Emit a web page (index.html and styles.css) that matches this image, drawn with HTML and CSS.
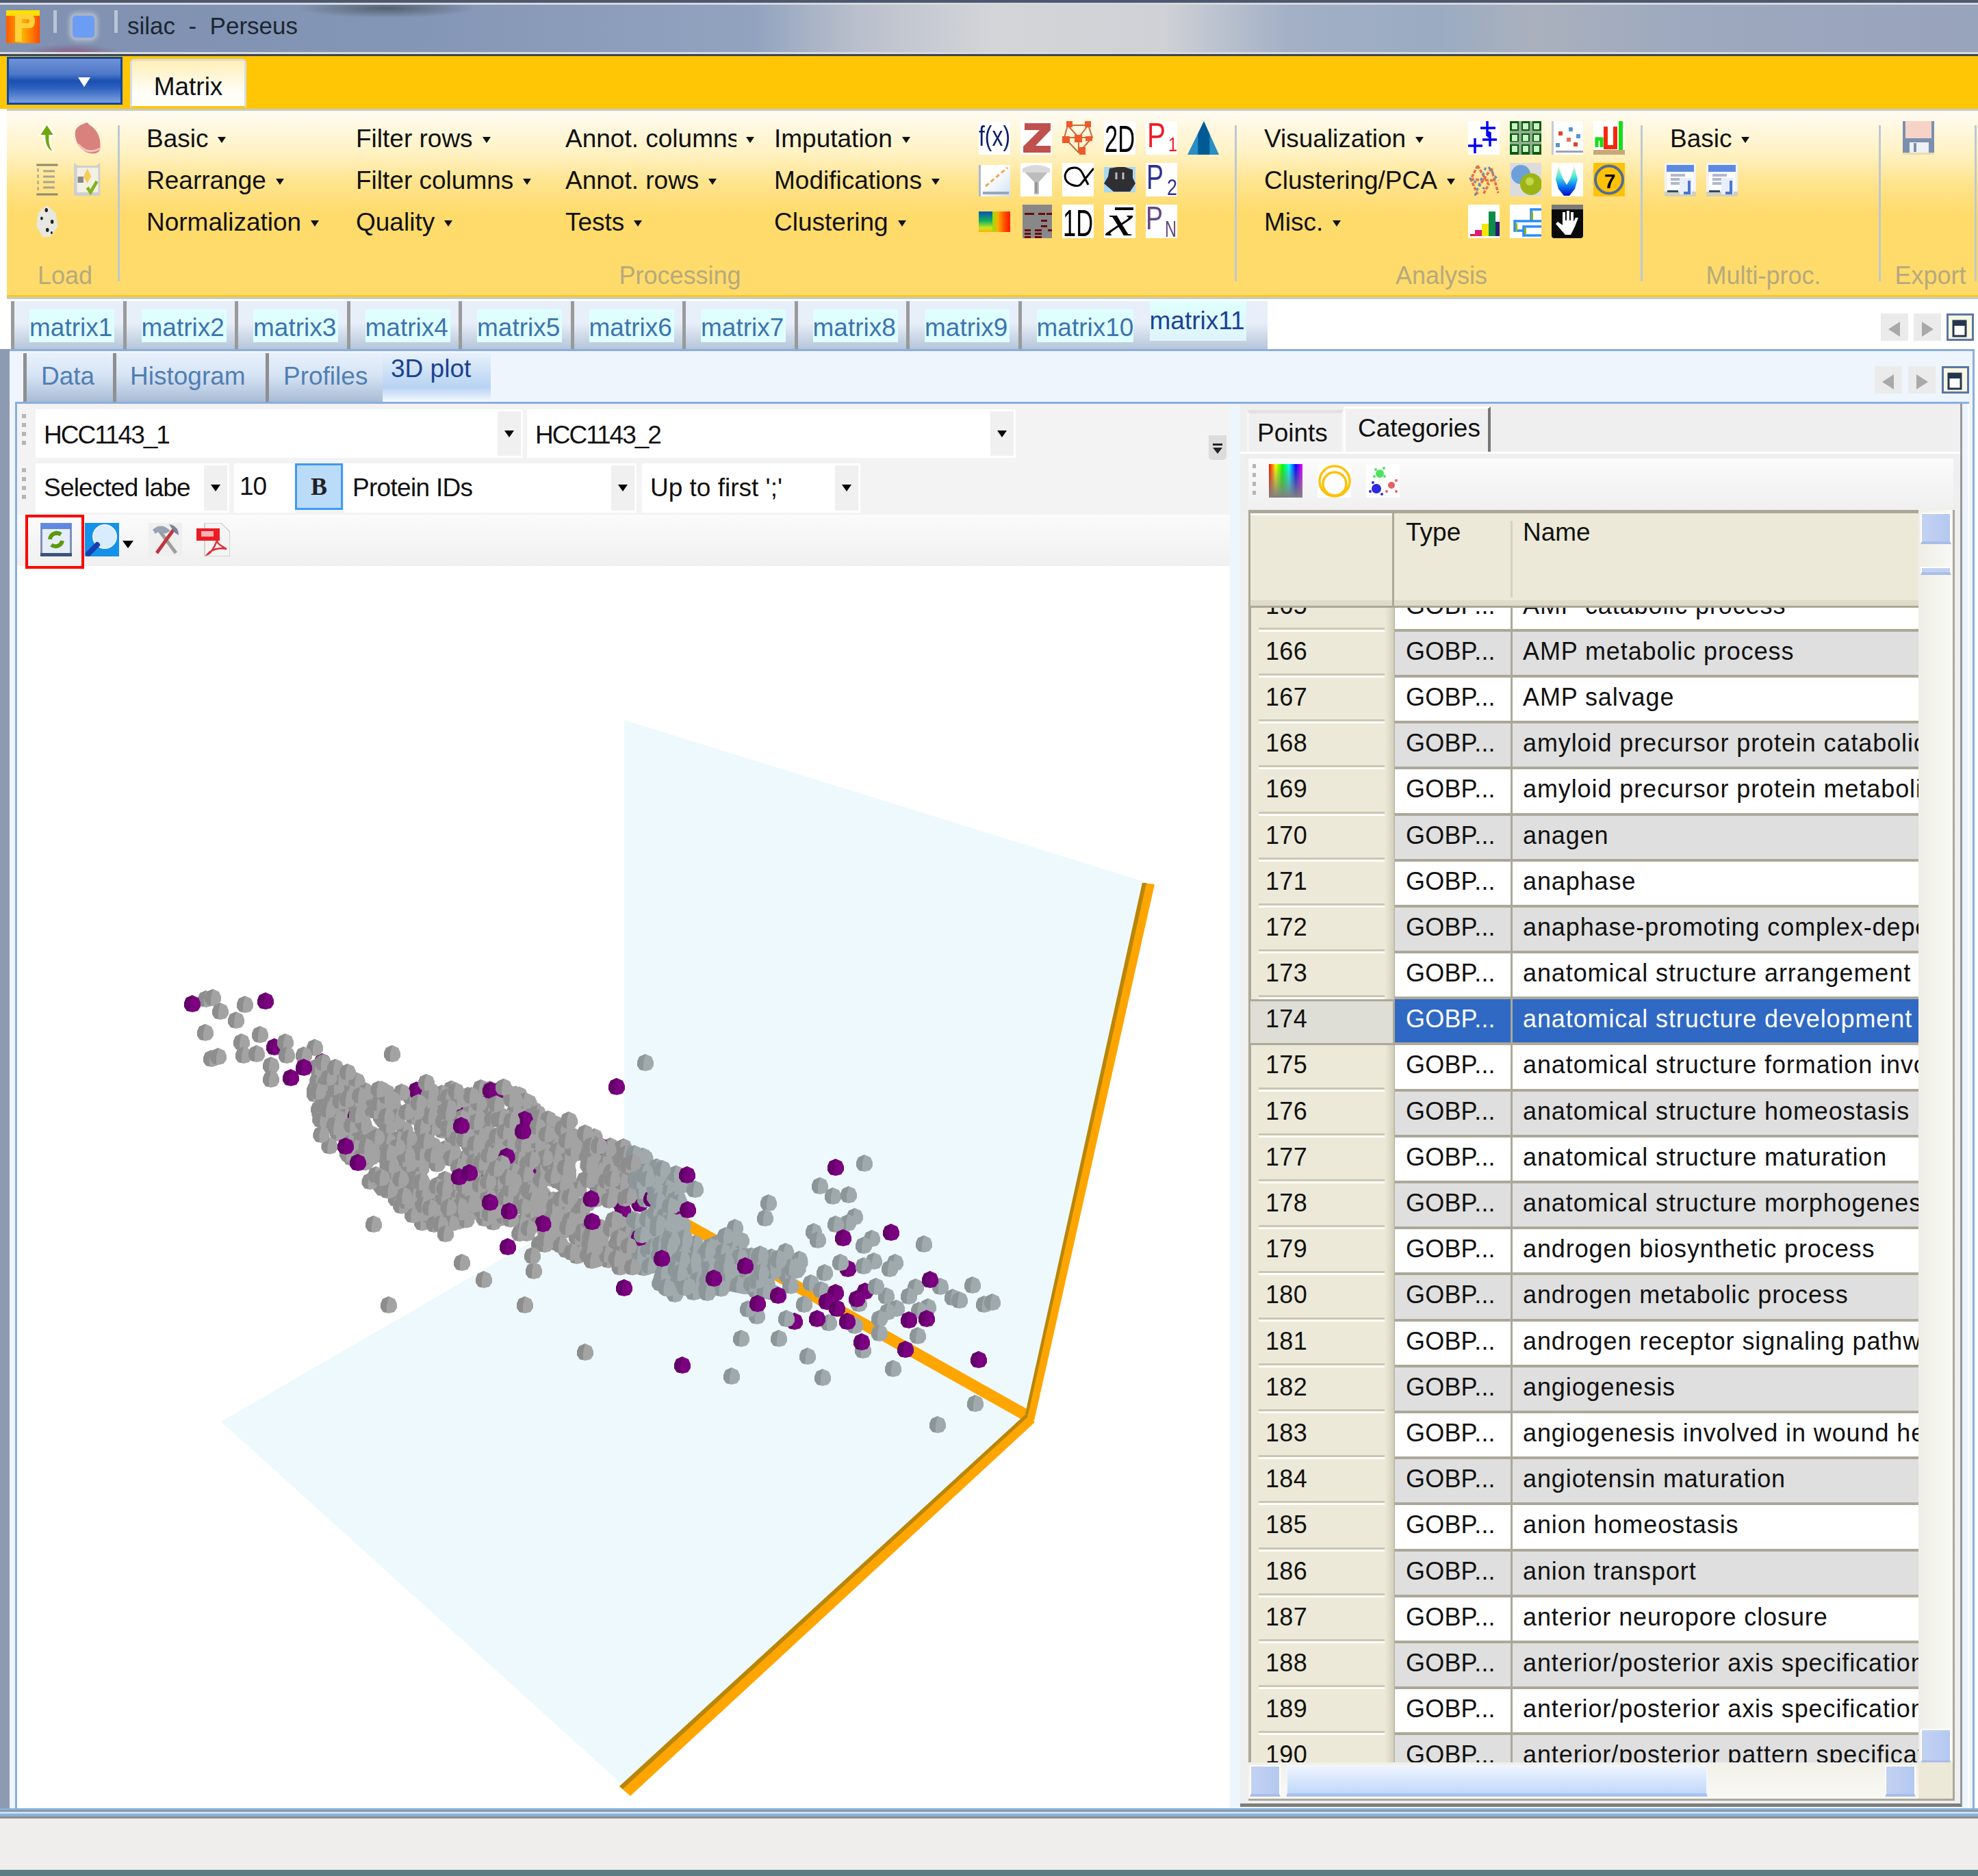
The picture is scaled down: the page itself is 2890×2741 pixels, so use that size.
FILE: index.html
```html
<!DOCTYPE html>
<html lang="en">
<head>
<meta charset="utf-8">
<title>silac - Perseus</title>
<link rel="stylesheet" href="styles.css">
</head>
<body>
<div class="app">
  <header class="titlebar">
    <svg class="app-logo" viewBox="0 0 49 48"><defs><linearGradient id="lg" x1="0" y1="0" x2="1" y2="0"><stop offset="0" stop-color="#ff5a00"/><stop offset=".5" stop-color="#ffb000"/><stop offset="1" stop-color="#ff4a00"/></linearGradient></defs><rect width="49" height="48" fill="url(#lg)"/><rect x="0" y="0" width="49" height="8" fill="#ffe000"/><path d="M13 6h20q9 0 9 10t-9 10H23v20H13zM23 13v6h8q3 0 3-3t-3-3z" fill="#ffd23c"/></svg>
    <span class="tb-sep"></span>
    <span class="qa-btn"></span>
    <span class="tb-sep"></span>
    <span class="win-title">silac  -  Perseus</span>
  </header>

  <div class="tabband">
    <button class="app-btn"><i></i></button>
    <div class="rtab">Matrix</div>
  </div>

  <section class="ribbon">
    <div class="rgroup r-load">
      <div class="rcontent">
        <div class="icons load-icons">
          <svg class="ico" viewBox="0 0 46 49" preserveAspectRatio="none"><path d="M23 2L40 22H30C29 32 30 38 38 46 24 44 17 36 17 22H6Z" fill="#fff"/><path d="M23 6L35 20H27C26 32 28 38 34 44 24 40 20 34 20 20H11Z" fill="#6fa80e"/></svg>
          <svg class="ico" viewBox="0 0 46 49" preserveAspectRatio="none"><path d="M22 2L26 6C38 12 44 26 42 40 41 47 34 48 26 47 12 44 2 30 3 16 4 8 14 4 22 2Z" fill="#d9827d"/><path d="M8 34Q22 50 42 40" stroke="#f3c2c0" stroke-width="3" fill="none"/></svg>
          <svg class="ico" viewBox="0 0 46 49" preserveAspectRatio="none"><path d="M3 3H44M3 46H44" stroke="#8f8a70" stroke-width="3"/><path d="M16 12H38M16 20H38M16 28H38M16 36H38" stroke="#a9a48a" stroke-width="3"/><path d="M6 8V42" stroke="#a9a48a" stroke-width="3" stroke-dasharray="5 4"/></svg>
          <svg class="ico" viewBox="0 0 46 49" preserveAspectRatio="none"><path d="M1 0L8 4H36L42 0V48H1Z" fill="#cfcfcf"/><rect x="6" y="7" width="33" height="36" fill="#f3f0e4"/><path d="M22 8l6 12-6 10-6-10z" fill="#f5cf55"/><rect x="7" y="20" width="9" height="9" fill="#888"/><path d="M22 36l5 7 10-16" stroke="#7eb51b" stroke-width="5" fill="none"/></svg>
          <svg class="ico" viewBox="0 0 46 49" preserveAspectRatio="none"><path d="M23 1L40 12 44 32 30 47H15L3 32 6 12Z" fill="#e8e8e2"/><g fill="#222"><circle cx="22" cy="8" r="3"/><circle cx="13" cy="20" r="2.5"/><circle cx="33" cy="25" r="3"/><circle cx="24" cy="37" r="3"/><circle cx="32" cy="41" r="2"/></g></svg>
        </div>
      </div>
      <div class="rlabel">Load</div>
    </div>
    <span class="rsep"></span>

    <div class="rgroup r-proc">
      <div class="rcontent">
        <div class="menus proc-menus">
          <div class="mcol"><span class="mi">Basic</span><span class="mi">Rearrange</span><span class="mi">Normalization</span></div>
          <div class="mcol"><span class="mi">Filter rows</span><span class="mi">Filter columns</span><span class="mi">Quality</span></div>
          <div class="mcol"><span class="mi"><span class="clip">Annot. columns</span></span><span class="mi">Annot. rows</span><span class="mi">Tests</span></div>
          <div class="mcol"><span class="mi">Imputation</span><span class="mi">Modifications</span><span class="mi">Clustering</span></div>
        </div>
        <div class="icons proc-icons">
          <svg class="ico" viewBox="0 0 46 49"><rect width="46" height="49" fill="#fff"/><text x="0" y="36" class="ic-t" font-size="40" textLength="46" lengthAdjust="spacingAndGlyphs" fill="#0a1f6a">f(x)</text></svg>
          <svg class="ico" viewBox="0 0 46 49"><rect width="46" height="49" fill="#fff"/><path d="M6 3H44V13L22 36H44V46H4V37L28 13H6Z" fill="#c0504d"/></svg>
          <svg class="ico" viewBox="0 0 46 49"><path d="M8 6H38M8 6L24 24M38 6L24 24M8 6L3 24 24 46 44 24 38 6M3 24H44M24 24V46" stroke="#c46a3c" stroke-width="2" fill="none"/><g fill="#f0582a"><rect x="6" width="9" height="9"/><rect x="33" width="9" height="9"/><rect y="22" width="11" height="10"/><rect x="18" y="20" width="11" height="11"/><rect x="34" y="22" width="10" height="7"/><rect x="25" y="38" width="9" height="11"/></g></svg>
          <svg class="ico" viewBox="0 0 46 49"><rect width="46" height="49" fill="#fff"/><text x="1" y="45" class="ic-t" font-size="56" textLength="44" lengthAdjust="spacingAndGlyphs" fill="#000">2D</text></svg>
          <svg class="ico" viewBox="0 0 46 49"><rect width="46" height="49" fill="#fff"/><text x="2" y="38" class="ic-t" font-size="50" fill="#ee1c25" textLength="27" lengthAdjust="spacingAndGlyphs">P</text><text x="33" y="44" class="ic-t" font-size="30" fill="#ee1c25" textLength="13" lengthAdjust="spacingAndGlyphs">1</text></svg>
          <svg class="ico" viewBox="0 0 46 49"><defs><linearGradient id="tri" x1="0" x2="1" y1="0" y2="0"><stop offset="0" stop-color="#2b8dc5"/><stop offset=".33" stop-color="#2b8dc5"/><stop offset=".34" stop-color="#005b94"/><stop offset=".7" stop-color="#005b94"/><stop offset=".71" stop-color="#2b8dc5"/></linearGradient></defs><path d="M24 0L46 49H0Z" fill="url(#tri)"/></svg>

          <svg class="ico" viewBox="0 0 46 49"><defs><linearGradient id="cg" x1="0" y1="0" x2="1" y2="1"><stop offset=".4" stop-color="#fff"/><stop offset="1" stop-color="#cfe0f8"/></linearGradient></defs><rect y="3" width="46" height="46" fill="url(#cg)"/><rect y="3" width="3" height="46" fill="#a8bad6"/><rect x="6" y="42" width="38" height="4" fill="#9aa6b8"/><path d="M10 34L42 7" stroke="#f6a54a" stroke-width="3" stroke-dasharray="6 4"/></svg>
          <svg class="ico" viewBox="0 0 46 49"><rect width="46" height="49" fill="#fff"/><path d="M3 10L43 10 27 28V46H20V28Z" fill="#bdbdbd"/><path d="M3 8Q23-2 43 8V14H3Z" fill="#d9d9d9"/><path d="M23 28V44" stroke="#8f8f8f" stroke-width="3"/></svg>
          <svg class="ico" viewBox="0 0 46 49"><rect width="46" height="49" fill="#fff"/><path d="M46 8L28 30Q24 36 14 32 4 28 4 19 6 7 18 7 26 7 30 16L38 32" stroke="#000" stroke-width="3" fill="none"/></svg>
          <svg class="ico" viewBox="0 0 46 49"><rect y="6" width="46" height="37" fill="#a9d8f2"/><path d="M8 8L20 6 30 6 42 10 42 22 46 30 38 42H14L0 30 6 20Z" fill="#2f2f33"/><path d="M18 14V24M28 14V24" stroke="#bbb" stroke-width="3"/></svg>
          <svg class="ico" viewBox="0 0 46 49"><rect width="46" height="49" fill="#fff"/><text x="1" y="38" class="ic-t" font-size="50" fill="#2e3192" textLength="25" lengthAdjust="spacingAndGlyphs">P</text><text x="31" y="47" class="ic-t" font-size="34" fill="#2e3192" textLength="15" lengthAdjust="spacingAndGlyphs">2</text></svg>
          <span class="ico-empty"></span>

          <svg class="ico" viewBox="0 0 46 49"><defs><linearGradient id="hm" x1="0" x2="0" y1="0" y2="1"><stop offset="0" stop-color="#0a50b4"/><stop offset=".45" stop-color="#10b060"/><stop offset=".8" stop-color="#c8e81c"/><stop offset="1" stop-color="#ffb000"/></linearGradient><linearGradient id="hm2" x1="0" x2="1" y1="0" y2="0"><stop offset="0" stop-color="#90e010"/><stop offset=".3" stop-color="#ffb000"/><stop offset=".7" stop-color="#ff4a00"/><stop offset="1" stop-color="#ff1a00"/></linearGradient></defs><rect y="10" width="24" height="30" fill="url(#hm)"/><rect x="20" y="10" width="26" height="30" fill="url(#hm2)"/></svg>
          <svg class="ico" viewBox="0 0 46 49"><rect x="3" width="43" height="49" fill="#888"/><path d="M6 12h14v3H6zM26 12h10v3H26zM38 12h8v3h-8zM30 22h9v3h-9zM30 30h9v3h-9zM6 36h9v3H6zM21 36h10v3H21zM40 36h6v3h-6zM6 41h9v3H6zM21 41h10v3H21zM6 46h9v3H6zM21 46h10v3H21z" fill="#6a0a0a"/></svg>
          <svg class="ico" viewBox="0 0 46 49"><rect width="46" height="49" fill="#fff"/><text x="1" y="46" class="ic-t" font-size="56" textLength="44" lengthAdjust="spacingAndGlyphs" fill="#000">1D</text></svg>
          <svg class="ico" viewBox="0 0 46 49"><rect width="46" height="49" fill="#fff"/><rect x="16" y="4" width="27" height="4" fill="#000"/><text x="3" y="45" class="ic-s" font-size="64" font-style="italic" fill="#000" textLength="40" lengthAdjust="spacingAndGlyphs">x</text></svg>
          <svg class="ico" viewBox="0 0 46 49"><rect width="46" height="49" fill="#fff"/><text x="0" y="36" class="ic-t" font-size="48" fill="#62487f" textLength="25" lengthAdjust="spacingAndGlyphs">P</text><text x="28" y="47" class="ic-t" font-size="33" fill="#62487f" textLength="17" lengthAdjust="spacingAndGlyphs">N</text></svg>
        </div>
      </div>
      <div class="rlabel">Processing</div>
    </div>
    <span class="rsep"></span>

    <div class="rgroup r-ana">
      <div class="rcontent">
        <div class="menus ana-menus">
          <div class="mcol"><span class="mi">Visualization</span><span class="mi">Clustering/PCA</span><span class="mi">Misc.</span></div>
        </div>
        <div class="icons ana-icons">
          <svg class="ico" viewBox="0 0 46 49"><rect width="46" height="49" fill="#fff"/><path d="M0 36H21M10 25V47M18 10H40M28 0V22M21 27H42M32 16V37M30 15V24" stroke="#0000f5" stroke-width="3.5"/></svg>
          <svg class="ico" viewBox="0 0 46 49"><rect width="46" height="49" fill="#0c5a0c"/><path d="M15 0V49M31 0V49M0 16H46M0 32H46" stroke="#8fae8f" stroke-width="4"/><g fill="#c8f5c8"><rect x="3" y="3" width="8" height="9"/><rect x="19" y="3" width="8" height="9"/><rect x="35" y="3" width="8" height="9"/><rect x="3" y="20" width="8" height="9"/><rect x="19" y="20" width="8" height="9"/><rect x="35" y="20" width="8" height="9"/><rect x="3" y="36" width="8" height="9"/><rect x="19" y="36" width="8" height="9"/><rect x="35" y="36" width="8" height="9"/></g></svg>
          <svg class="ico" viewBox="0 0 46 49"><rect width="46" height="49" fill="#fff"/><rect width="3" height="49" fill="#c4cad6"/><rect x="6" y="43" width="40" height="3" fill="#9aa4b8"/><g><rect x="10" y="15" width="6" height="6" fill="#d8462c"/><rect x="25" y="9" width="6" height="6" fill="#5a94cc"/><rect x="36" y="19" width="6" height="6" fill="#5a94cc"/><rect x="22" y="24" width="6" height="6" fill="#e67055"/><rect x="32" y="31" width="6" height="6" fill="#d8462c"/><rect x="6" y="32" width="6" height="6" fill="#5a94cc"/></g></svg>
          <svg class="ico" viewBox="0 0 46 49"><rect width="46" height="46" fill="#fff"/><path d="M18 8V38H32V8" stroke="#f5280a" stroke-width="6" fill="none"/><path d="M5 38V26H12V38" stroke="#12e012" stroke-width="5" fill="none"/><path d="M40 0V44" stroke="#12e012" stroke-width="6"/><rect y="42" width="46" height="7" fill="#c8a878"/></svg>

          <svg class="ico" viewBox="0 0 46 49"><path d="M14 4L4 24 14 46M14 4L30 32 22 46M34 8L16 34M34 8L44 44M4 24L40 26" stroke="#e0704e" stroke-width="3.5" fill="none" stroke-dasharray="5 2"/><path d="M10 48L26 6M30 6L44 26M2 22L24 38" stroke="#5c8fc4" stroke-width="3" fill="none" stroke-dasharray="4 4"/></svg>
          <svg class="ico" viewBox="0 0 46 49"><rect width="46" height="49" fill="#dcdcdc"/><circle cx="16" cy="17" r="14" fill="#6ca0d8"/><circle cx="31" cy="31" r="16" fill="#9cb514"/><circle cx="29" cy="27" r="6" fill="#c4d84c"/></svg>
          <svg class="ico" viewBox="0 0 46 49"><defs><linearGradient id="fl" x1="0" x2="0" y1="0" y2="1"><stop offset="0" stop-color="#f5f5c0"/><stop offset=".4" stop-color="#40e0e0"/><stop offset=".7" stop-color="#0a70f0"/><stop offset="1" stop-color="#0008c8"/></linearGradient></defs><rect width="46" height="49" fill="#fff"/><path d="M10 4L16 22 22 32 28 22 33 4 38 24 34 38 26 48H18L10 38 6 24Z" fill="url(#fl)"/></svg>
          <svg class="ico" viewBox="0 0 46 49"><rect width="46" height="49" fill="#ffc107"/><circle cx="23" cy="24.500" r="20" fill="none" stroke="#4f6e96" stroke-width="4"/><text x="16" y="37" class="ic-t" font-size="30" font-weight="700" fill="#000">7</text></svg>

          <svg class="ico" viewBox="0 0 46 49"><rect width="46" height="49" fill="#fff"/><rect x="3" y="43" width="14" height="3" fill="#e02020"/><rect x="10" y="37" width="10" height="9" fill="#e0187a"/><rect x="20" y="28" width="10" height="18" fill="#f5e600"/><rect x="30" y="10" width="10" height="36" fill="#0e8c4a"/><rect x="40" y="25" width="6" height="21" fill="#2a1a7a"/></svg>
          <svg class="ico" viewBox="0 0 46 49"><rect width="46" height="49" fill="#fff"/><path d="M46 7H31V24H7V38H20V45H46M31 24H46M20 38V32H46M3 24" stroke="#2a8cff" stroke-width="3.500" fill="none"/><rect x="31" y="10" width="3" height="12" fill="#8cb400"/><rect x="8" y="27" width="3" height="12" fill="#8cb400"/><rect x="21" y="34" width="3" height="9" fill="#8cb400"/></svg>
          <svg class="ico" viewBox="0 0 46 49"><rect width="46" height="49" rx="4" fill="#0a0a0a"/><rect width="46" height="7" fill="#7a7a7a"/><path d="M16 11h4v12h2V9h4v14h2V11h4v14l3-6h4l-5 13-6 12H20L6 28l3-3 7 5z" fill="#fff"/></svg>
        </div>
      </div>
      <div class="rlabel">Analysis</div>
    </div>
    <span class="rsep"></span>

    <div class="rgroup r-multi">
      <div class="rcontent">
        <div class="multi-col">
          <span class="mi">Basic</span>
          <div class="multi-icons">
            <svg class="ico" viewBox="0 0 46 49"><use href="#winico"/></svg>
            <svg class="ico" viewBox="0 0 46 49"><use href="#winico"/></svg>
          </div>
        </div>
      </div>
      <div class="rlabel">Multi-proc.</div>
    </div>
    <span class="rsep"></span>

    <div class="rgroup r-export">
      <div class="rcontent">
        <svg class="ico export-ico" viewBox="0 0 46 49"><rect width="46" height="46" fill="#7b8fb0"/><rect x="4" y="0" width="38" height="25" fill="#f6d3c6"/><rect x="10" y="31" width="28" height="15" fill="#eef0f4"/><rect x="16" y="32" width="4" height="13" fill="#7b8fb0"/><rect y="46" width="46" height="3" fill="#eadcb0"/></svg>
      </div>
      <div class="rlabel">Export</div>
    </div>
    <span class="rsep"></span>
  </section>

  <svg class="defs-holder" width="0" height="0"><defs>
    <g id="winico"><rect width="46" height="49" fill="#f3f3f3"/><rect y="42" width="46" height="7" fill="#d0d0bc"/><rect x="3" y="3" width="40" height="10" fill="#5d8ae0"/><rect x="4" y="13" width="38" height="27" fill="#fff"/><path d="M9 18H30M9 24H30M9 30H24" stroke="#aeb8cf" stroke-width="4"/><rect x="22" y="22" width="18" height="24" fill="#e8eefb"/><path d="M36 26V44L28 44" stroke="#4a76d0" stroke-width="4" fill="none"/><rect x="4" y="40" width="16" height="3" fill="#30486c"/></g>
    <g id="navl"><rect width="40" height="40" fill="#ebebeb"/><path d="M28 12V34L11 23Z" fill="#a9a9a9"/></g>
    <g id="navr"><rect width="40" height="40" fill="#ebebeb"/><path d="M12 12V34L29 23Z" fill="#a9a9a9"/></g>
    <g id="navw"><rect x="1.500" y="1.500" width="37" height="37" fill="#f8f8e0" stroke="#5a76a8" stroke-width="3"/><path d="M10 11H28V33H10Z" fill="#fff" stroke="#24364e" stroke-width="3"/><rect x="10" y="11" width="18" height="7" fill="#24364e"/></g>
  </defs></svg>

  <nav class="doctabs">
    <div class="tabstrip">
      <div class="dtab"><span>matrix1</span></div>
      <div class="dtab"><span>matrix2</span></div>
      <div class="dtab"><span>matrix3</span></div>
      <div class="dtab"><span>matrix4</span></div>
      <div class="dtab"><span>matrix5</span></div>
      <div class="dtab"><span>matrix6</span></div>
      <div class="dtab"><span>matrix7</span></div>
      <div class="dtab"><span>matrix8</span></div>
      <div class="dtab"><span>matrix9</span></div>
      <div class="dtab dtab-wide"><span>matrix10</span></div>
      <div class="dtab-active">matrix11</div>
    </div>
    <div class="navs navs-doc">
      <svg viewBox="0 0 40 40"><use href="#navl"/></svg>
      <svg viewBox="0 0 40 40"><use href="#navr"/></svg>
      <svg viewBox="0 0 40 40"><use href="#navw"/></svg>
    </div>
  </nav>

  <main class="doc">
    <div class="viewtabs">
      <div class="vtab vt-data">Data</div>
      <div class="vtab vt-hist">Histogram</div>
      <div class="vtab vt-prof">Profiles</div>
      <div class="vtab-active">3D plot</div>
      <div class="navs navs-view">
        <svg viewBox="0 0 40 40"><use href="#navl"/></svg>
        <svg viewBox="0 0 40 40"><use href="#navr"/></svg>
        <svg viewBox="0 0 40 40"><use href="#navw"/></svg>
      </div>
    </div>

    <div class="viewpanel">
      <section class="leftpane">
        <div class="tb tb1">
          <span class="grip"></span>
          <div class="combo c-x"><span class="ctext">HCC1143_1</span><span class="cbtn"></span></div>
          <div class="combo c-y"><span class="ctext">HCC1143_2</span><span class="cbtn"></span></div>
          <span class="overflow"><i></i><i></i></span>
        </div>
        <div class="tb tb2">
          <span class="grip"></span>
          <div class="combo c-sel"><span class="ctext">Selected labe</span><span class="cbtn"></span></div>
          <div class="numbox">10</div>
          <div class="bold-btn">B</div>
          <div class="combo c-ids"><span class="ctext">Protein IDs</span><span class="cbtn"></span></div>
          <div class="combo c-up"><span class="ctext">Up to first ';'</span><span class="cbtn"></span></div>
        </div>
        <div class="tb tb3">
          <div class="hl-box">
            <svg class="ico" viewBox="0 0 46 49"><rect width="46" height="49" fill="#7e92b6"/><rect x="1" y="1" width="44" height="8" fill="#5d8ae0"/><rect x="3" y="9" width="40" height="35" fill="#e6edf8"/><rect y="44" width="46" height="5" fill="#3a5278"/><path d="M30 17A10 10 0 0 0 14 24M16 32A10 10 0 0 0 32 26" stroke="#5a9a0a" stroke-width="6" fill="none"/></svg>
          </div>
          <svg class="ico" viewBox="0 0 50 49"><rect width="50" height="49" fill="#1491e8"/><circle cx="29" cy="20" r="17" fill="#d7ecff" stroke="#eaf4ff" stroke-width="2"/><path d="M18 32L5 45" stroke="#1a3fb0" stroke-width="8" stroke-linecap="round"/></svg>
          <i class="mini-arrow"></i>
          <svg class="ico ico-tools" viewBox="0 0 49 49"><rect width="49" height="49" fill="#efefef"/><path d="M12 6L40 44" stroke="#9e9e9e" stroke-width="5"/><path d="M38 8L12 44" stroke="#c0353e" stroke-width="5"/><path d="M6 10Q20-2 32 12L24 16Q16 10 10 16Z" fill="#9aa3b5"/><path d="M30 2Q44 4 44 18L38 14Z" fill="#7a8296"/></svg>
          <svg class="ico ico-pdf" viewBox="0 0 49 49"><path d="M12 0H36L49 13V49H12Z" fill="#f4f4f4" stroke="#b0b0b0"/><rect y="8" width="34" height="18" fill="#ea1c24"/><rect x="7" y="12" width="18" height="8" fill="#f8b0b0"/><path d="M30 26C26 36 22 44 16 46 22 38 34 36 44 38 36 34 30 30 30 26Z" fill="none" stroke="#e0303a" stroke-width="2.500"/></svg>
        </div>
        <div class="plot">
          <svg id="plot3d" class="plot-svg" viewBox="25 827 1772 1815">
            <defs>
              <g id="hex-g"><polygon points="0,-13 9,-9 12,-2 12,4 8,10 0,12 -8,10 -12,4 -12,-2 -9,-9" fill="#a3a3a3"/><polygon points="0,-13 -9,-9 -12,-2 -12,4 -8,10 -3,11 -3,0" fill="#8d8d8d"/></g>
              <g id="hex-b"><polygon points="0,-13 9,-9 12,-2 12,4 8,10 0,12 -8,10 -12,4 -12,-2 -9,-9" fill="#a0a9ac"/><polygon points="0,-13 -9,-9 -12,-2 -12,4 -8,10 -3,11 -3,0" fill="#8c9699"/></g>
              <g id="hex-p"><polygon points="0,-13 9,-9 12,-2 12,4 8,10 0,12 -8,10 -12,4 -12,-2 -9,-9" fill="#7a0080"/><polygon points="0,-13 -9,-9 -12,-2 -12,4 -8,10 -3,11 -3,0" fill="#640069"/></g>
            </defs>
            <polygon class="plane" points="912,1052 1678,1290 1503,2072 912,2610 323,2077 912,1736"/>
            <polygon class="axis" points="972,1762 1510,2064 1500,2078 965,1777"/>
            <polygon class="axis" points="1669,1290 1687,1292 1511,2076 1497,2072"/>
            <polygon class="axis-shade" points="1669,1290 1675,1290 1501,2072 1497,2070"/>
            <polygon class="axis" points="1499,2066 1512,2078 921,2624 905,2610"/>
            <polygon class="axis-shade" points="1499,2066 1502,2070 910,2614 905,2610"/>
            <g id="points"></g>
          </svg>
        </div>
      </section>

      <aside class="rightpane">
        <div class="catpanel">
          <div class="cat-tabs">
            <div class="ctab">Points</div>
            <div class="ctab-active">Categories</div>
          </div>
          <div class="cat-body">
            <div class="cat-toolbar">
              <span class="grip grip-small"></span>
              <svg class="ico" viewBox="0 0 49 49"><defs><linearGradient id="rb" x1="0" x2="1" y1="0" y2="0"><stop offset="0" stop-color="#f00"/><stop offset=".2" stop-color="#ff0"/><stop offset=".4" stop-color="#0f0"/><stop offset=".6" stop-color="#0ff"/><stop offset=".8" stop-color="#00f"/><stop offset="1" stop-color="#f0f"/></linearGradient><linearGradient id="rb2" x1="0" x2="0" y1="0" y2="1"><stop offset="0" stop-color="#808080" stop-opacity="0"/><stop offset="1" stop-color="#808080"/></linearGradient></defs><rect width="49" height="49" fill="url(#rb)"/><rect width="49" height="49" fill="url(#rb2)"/></svg>
              <svg class="ico" viewBox="0 0 49 49"><rect width="49" height="49" fill="#fff"/><ellipse cx="25" cy="25" rx="22" ry="22" fill="none" stroke="#ffc107" stroke-width="3.500"/><ellipse cx="25" cy="29" rx="17" ry="17" fill="none" stroke="#ffc107" stroke-width="3.500"/></svg>
              <svg class="ico" viewBox="0 0 49 49"><rect width="49" height="49" fill="#fff"/><g fill="#50e060"><circle cx="20" cy="14" r="6"/><circle cx="14" cy="8" r="2"/><circle cx="26" cy="6" r="2"/><circle cx="27" cy="18" r="2"/><circle cx="12" cy="18" r="2"/></g><g fill="#2a2ae0"><circle cx="15" cy="36" r="7"/><circle cx="6" cy="40" r="2"/><circle cx="23" cy="44" r="2"/><circle cx="10" cy="27" r="2"/></g><g fill="#e86060"><circle cx="37" cy="31" r="5"/><circle cx="44" cy="24" r="2"/><circle cx="44" cy="40" r="2"/><circle cx="30" cy="40" r="2"/></g></svg>
            </div>
            <div class="cat-grid">
              <div class="cat-main">
                <div class="g-head">
                  <div class="gh-corner"></div>
                  <div class="gh-type">Type</div>
                  <div class="gh-name">Name</div>
                </div>
                <div class="g-clip">
                  <div class="g-rows">
                    <div class="row"><div class="rh">165</div><div class="c1">GOBP...</div><div class="c2">AMP catabolic process</div></div>
                    <div class="row even"><div class="rh">166</div><div class="c1">GOBP...</div><div class="c2">AMP metabolic process</div></div>
                    <div class="row"><div class="rh">167</div><div class="c1">GOBP...</div><div class="c2">AMP salvage</div></div>
                    <div class="row even"><div class="rh">168</div><div class="c1">GOBP...</div><div class="c2">amyloid precursor protein catabolic process</div></div>
                    <div class="row"><div class="rh">169</div><div class="c1">GOBP...</div><div class="c2">amyloid precursor protein metabolic process</div></div>
                    <div class="row even"><div class="rh">170</div><div class="c1">GOBP...</div><div class="c2">anagen</div></div>
                    <div class="row"><div class="rh">171</div><div class="c1">GOBP...</div><div class="c2">anaphase</div></div>
                    <div class="row even"><div class="rh">172</div><div class="c1">GOBP...</div><div class="c2">anaphase-promoting complex-dependent process</div></div>
                    <div class="row"><div class="rh">173</div><div class="c1">GOBP...</div><div class="c2">anatomical structure arrangement</div></div>
                    <div class="row selected"><div class="rh">174</div><div class="c1">GOBP...</div><div class="c2">anatomical structure development</div></div>
                    <div class="row"><div class="rh">175</div><div class="c1">GOBP...</div><div class="c2">anatomical structure formation involved in morphogenesis</div></div>
                    <div class="row even"><div class="rh">176</div><div class="c1">GOBP...</div><div class="c2">anatomical structure homeostasis</div></div>
                    <div class="row"><div class="rh">177</div><div class="c1">GOBP...</div><div class="c2">anatomical structure maturation</div></div>
                    <div class="row even"><div class="rh">178</div><div class="c1">GOBP...</div><div class="c2">anatomical structure morphogenesis</div></div>
                    <div class="row"><div class="rh">179</div><div class="c1">GOBP...</div><div class="c2">androgen biosynthetic process</div></div>
                    <div class="row even"><div class="rh">180</div><div class="c1">GOBP...</div><div class="c2">androgen metabolic process</div></div>
                    <div class="row"><div class="rh">181</div><div class="c1">GOBP...</div><div class="c2">androgen receptor signaling pathway</div></div>
                    <div class="row even"><div class="rh">182</div><div class="c1">GOBP...</div><div class="c2">angiogenesis</div></div>
                    <div class="row"><div class="rh">183</div><div class="c1">GOBP...</div><div class="c2">angiogenesis involved in wound healing</div></div>
                    <div class="row even"><div class="rh">184</div><div class="c1">GOBP...</div><div class="c2">angiotensin maturation</div></div>
                    <div class="row"><div class="rh">185</div><div class="c1">GOBP...</div><div class="c2">anion homeostasis</div></div>
                    <div class="row even"><div class="rh">186</div><div class="c1">GOBP...</div><div class="c2">anion transport</div></div>
                    <div class="row"><div class="rh">187</div><div class="c1">GOBP...</div><div class="c2">anterior neuropore closure</div></div>
                    <div class="row even"><div class="rh">188</div><div class="c1">GOBP...</div><div class="c2">anterior/posterior axis specification</div></div>
                    <div class="row"><div class="rh">189</div><div class="c1">GOBP...</div><div class="c2">anterior/posterior axis specification</div></div>
                    <div class="row even"><div class="rh">190</div><div class="c1">GOBP...</div><div class="c2">anterior/posterior pattern specification</div></div>
                  </div>
                </div>
                <div class="hscroll">
                  <span class="sb-btn"></span>
                  <span class="h-thumb"></span>
                  <span class="sb-btn sb-right"></span>
                </div>
              </div>
              <div class="vscroll">
                <span class="sb-btn sb-v"></span>
                <span class="v-thumb"></span>
                <span class="sb-btn sb-v sb-vdown"></span>
                <span class="sb-corner"></span>
              </div>
            </div>
          </div>
        </div>
      </aside>
    </div>
  </main>

  <footer class="statusbar"></footer>
</div>
<script src="script.js"></script>
</body>
</html>
```
FILE: styles.css
```css
* { box-sizing: border-box; }
html, body { margin: 0; padding: 0; background: #fff; }
body { font-family: "Liberation Sans", Arial, sans-serif; font-size: 37px; color: #111; }
.app { width: 2890px; height: 2741px; display: flex; flex-direction: column; overflow: hidden; position: relative; background: #fff; }
.defs-holder { position: absolute; }

/* title bar */
.titlebar {
  height: 82px; flex: none; display: flex; align-items: flex-start;
  border-top: 4px solid #4d586e; border-bottom: 3px solid #3f4650;
  box-shadow: inset 0 3px 0 #d5d8dd, inset 0 -3px 0 #d7dade;
  background:
    radial-gradient(ellipse 70px 14px at 105px 74px, #8c5a80 0, rgba(140,90,128,0) 100%),
    radial-gradient(ellipse 130px 14px at 565px 8px, #56606f 0, rgba(86,96,111,0) 100%),
    linear-gradient(90deg, #7f90b0 0, #8496b5 600px, #91a3bf 1100px, #b9bfcb 1250px, #d3d5d9 1450px, #cfd1d6 1700px, #a3b0c6 1880px, #9aabc2 2100px, #aab1bd 2240px, #9ea9bf 2450px, #98a3bc 2890px);
}
.app-logo { width: 49px; height: 48px; margin: 11px 0 0 9px; flex: none; }
.tb-sep { width: 5px; height: 33px; margin: 11px 0 0 20px; background: #bcc5d4; flex: none; }
.qa-btn { width: 38px; height: 38px; margin: 16px 0 0 20px; background: #6c9df5; border: 3px solid #aab3c2; border-radius: 8px; box-shadow: 0 0 8px rgba(255,255,255,.6); flex: none; }
.qa-btn + .tb-sep { margin-left: 26px; }
.win-title { margin: 13px 0 0 14px; font-size: 35px; line-height: 42px; white-space: pre; color: #1c2632; }

/* ribbon tabs */
.tabband { height: 77px; flex: none; background: #ffc606; display: flex; align-items: flex-start; padding-left: 10px; }
.app-btn { width: 169px; height: 70px; margin-top: 1px; padding: 0; border: 3px solid #1046a6; background: linear-gradient(#6f92d6 0, #4f78c8 35%, #1a50b2 50%, #2a5fbe 65%, #7fa0dd 100%); position: relative; flex: none; }
.app-btn i { position: absolute; left: 101px; top: 27px; width: 0; height: 0; border-left: 9px solid transparent; border-right: 9px solid transparent; border-top: 14px solid #fff; }
.rtab { width: 170px; height: 72px; margin: 4px 0 0 11px; padding-top: 8px; text-align: center; line-height: 60px; border: 3px solid #d8dde2; border-bottom: 3px solid #ffc606; border-radius: 6px 6px 0 0; background: linear-gradient(#ffefb6, #fffef9 70%); }

/* ribbon */
.ribbon {
  height: 278px; flex: none; display: flex; margin-left: 10px;
  border-top: 3px solid #c2ccd6; border-bottom: 3px solid #bccbd9;
  box-shadow: inset 0 -3px 0 #ffc71c;
  background: linear-gradient(#fffcf2 0, #fff2c4 60px, #ffe48e 105px, #ffdb6b 150px, #ffdb6b 100%);
}
.rgroup { display: flex; flex-direction: column; height: 266px; flex: none; }
.rcontent { display: flex; flex: 1; min-height: 0; align-items: flex-start; }
.rlabel { height: 40px; margin-bottom: 5px; padding-left: 8px; line-height: 40px; text-align: center; font-size: 36px; color: #b5aa7e; flex: none; }
.rsep { width: 3px; height: 228px; margin-top: 21px; background: #bcc8d4; flex: none; }
.r-load { width: 162px; }
.r-proc { width: 1629px; }
.r-ana { width: 590px; }
.r-multi { width: 345px; }
.r-export { width: 137px; }

.icons { display: grid; grid-auto-rows: 49px; row-gap: 12px; column-gap: 15px; margin-top: 15px; flex: none; }
.ico { width: 46px; height: 49px; display: block; flex: none; filter: blur(.4px); }
.ico-empty { display: block; }
.load-icons { grid-template-columns: 35px 43px; column-gap: 21px; margin-left: 41px; }
.load-icons .ico { width: 100%; }
.proc-icons { grid-template-columns: repeat(6, 46px); }
.ana-icons { grid-template-columns: repeat(4, 46px); }
.ic-t { font-family: "Liberation Sans", Arial, sans-serif; }
.ic-s { font-family: "Liberation Serif", serif; }

.menus { display: flex; padding-top: 10px; flex: none; }
.mcol { display: flex; flex-direction: column; }
.mi { display: flex; align-items: center; height: 61px; white-space: nowrap; }
.mi::after { content: ""; width: 0; height: 0; margin: 3px 0 0 14px; border-left: 6px solid transparent; border-right: 6px solid transparent; border-top: 9px solid #111; flex: none; }
.clip { width: 250px; overflow: hidden; display: block; }
.proc-menus { margin-left: 39px; width: 1216px; }
.proc-menus .mcol { width: 305px; flex: none; }
.proc-menus .mcol:first-child { width: 306px; }
.proc-menus .mcol:nth-child(2) { width: 306px; }
.proc-menus .mcol:last-child { width: 299px; }
.ana-menus { margin-left: 40px; width: 298px; }
.multi-col { margin: 10px 0 0 32px; }
.multi-col > .mi { margin-left: 8px; }
.multi-icons { display: flex; gap: 15px; margin-top: 5px; }
.export-ico { margin: 15px 0 0 32px; }

/* document tabs */
.doctabs { height: 73px; flex: none; display: flex; margin-left: 16px; padding-top: 3px; position: relative; }
.tabstrip { display: flex; width: 1836px; height: 70px; background: linear-gradient(#e6eef9 0, #e8eff9 45%, #b5c5d9 100%); }
.dtab { width: 163.500px; height: 70px; border-left: 5px solid #9a9a9a; padding: 12px 0 0 22px; color: #3d74ad; flex: none; }
.dtab-wide { width: 192px; }
.dtab span { display: block; width: 124px; height: 48px; line-height: 54px; background: #dfffff; overflow: hidden; white-space: nowrap; }
.dtab-wide span { width: 141px; }
.dtab-active { width: 141px; height: 58px; line-height: 58px; color: #1b4292; background: linear-gradient(#dfffff, #dff4fb); flex: none; white-space: nowrap; overflow: hidden; }
.navs { display: flex; position: absolute; }
.navs svg { width: 40px; height: 40px; display: block; }
.navs-doc { right: 0; top: 21px; gap: 8px; left: 2732px; }
.navs-view { left: 2725px; top: 22px; gap: 9px; }

/* main document */
.doc { flex: 1; min-height: 0; margin-left: 14px; margin-right: 5px; display: flex; flex-direction: column; background: #eef5fd; border-top: 3px solid #8aaedd; position: relative; padding-right: 6px; box-shadow: inset -3px 0 0 #8aaedd, -14px 0 0 #8d9ab2; }
.viewtabs { height: 74px; flex: none; display: flex; padding: 3px 0 0 20px; position: relative; }
.vtab { height: 71px; border-left: 5px solid #8f8f8f; background: linear-gradient(#e8f1fc 0, #d7e4f5 45%, #a9bcd5 100%); color: #4f7fb3; line-height: 68px; flex: none; white-space: nowrap; }
.vt-data { width: 131px; padding-left: 21px; }
.vt-hist { width: 223px; padding-left: 20px; }
.vt-prof { width: 171px; padding-left: 21px; }
.vtab-active { width: 158px; height: 71px; padding: 0 0 0 12px; line-height: 46px; color: #1b4292; background: linear-gradient(#e8f1fc 0, #b7d3f2 70%, #f5f9fe 100%); flex: none; white-space: nowrap; }

.viewpanel { height: 2055px; margin-left: 8px; margin-right: 2px; display: flex; border-top: 3px solid #8aaedd; border-left: 3px solid #8aaedd; background: #fff; flex: none; }

/* left pane */
.leftpane { width: 1772px; flex: none; display: flex; flex-direction: column; }
.tb { display: flex; flex: none; background: #f3f3f3; }
.tb1 { height: 82px; padding: 8px 0 3px; position: relative; }
.tb2 { height: 80px; padding: 5px 0 3px; }
.tb3 { height: 75px; align-items: flex-start; background: linear-gradient(#fbfbfb, #f0f0f0); position: relative; padding-top: 12px; }
.grip { width: 27px; flex: none; position: relative; }
.grip::before { content: ""; position: absolute; left: 7px; top: 7px; width: 6px; height: 48px; background: repeating-linear-gradient(#b5b5b5 0, #b5b5b5 6px, transparent 6px, transparent 13px); }
.combo { display: flex; align-items: stretch; background: #fff; flex: none; }
.ctext { flex: 1; padding-left: 12px; line-height: 72px; white-space: nowrap; overflow: hidden; }
.cbtn { width: 34px; margin: 3px 3px 3px 0; background: #f0f0f0; flex: none; position: relative; }
.cbtn::after { content: ""; position: absolute; left: 10px; top: 28px; border-left: 7px solid transparent; border-right: 7px solid transparent; border-top: 10px solid #000; }
.c-x { width: 712px; margin-right: 6px; }
.c-y { width: 714px; }
.c-x .ctext, .c-y .ctext { line-height: 75px; letter-spacing: -2px; }
.c-sel { width: 283px; margin-right: 7px; }
.c-sel .ctext { letter-spacing: -.8px; }
.numbox { width: 89px; background: #fff; padding-left: 8px; line-height: 68px; flex: none; letter-spacing: -1px; }
.bold-btn { width: 70px; height: 68px; border: 3px solid #3d9bf5; background: #bbdcf8; font: bold 36px/62px "Liberation Serif", serif; text-align: center; color: #222; flex: none; }
.c-ids { width: 427px; margin: 0 8px 0 2px; }
.c-ids .ctext { letter-spacing: -.7px; }
.c-up { width: 319px; }
.overflow { position: absolute; left: 1741px; bottom: 0; width: 26px; height: 36px; background: #dcdcdc; border-radius: 0 0 5px 5px; }
.overflow i { position: absolute; left: 6px; height: 0; width: 14px; }
.overflow i:first-child { top: 12px; border-top: 3px solid #222; }
.overflow i:last-child { top: 18px; border-left: 7px solid transparent; border-right: 7px solid transparent; border-top: 9px solid #222; width: 0; }
.hl-box { width: 86px; height: 79px; margin: -12px 1px 0 12px; border: 4px solid #f00; padding: 8px 0 0 18px; flex: none; position: relative; }
.tb3 > svg:nth-of-type(1) { width: 50px; }
.mini-arrow { width: 0; height: 0; margin: 26px 22px 0 5px; border-left: 8px solid transparent; border-right: 8px solid transparent; border-top: 11px solid #000; flex: none; }
.ico-tools { width: 49px; }
.ico-pdf { width: 49px; margin-left: 21px; }

.plot { flex: 1; min-height: 0; background: #fff; }
.plot-svg { width: 1772px; height: 1815px; display: block; filter: blur(.7px); }
.plane { fill: #eef9fd; }
.axis { fill: #ffa500; }
.axis-shade { fill: #b8860b; }

/* right pane */
.rightpane { width: 1078px; flex: none; background: #edf5fd; padding-left: 15px; }
.catpanel { width: 1055px; height: 2050px; background: #efefef; border-bottom: 5px solid #7d7d7d; border-right: 3px solid #9a9a9a; display: flex; flex-direction: column; }
.cat-tabs { height: 70px; flex: none; display: flex; padding: 5px 0 0 10px; align-items: flex-end; }
.ctab { width: 141px; height: 61px; border: 3px solid #f6f6f6; border-bottom: 0; border-top: 5px solid #e2e2e2; padding-left: 12px; line-height: 57px; }
.ctab-active { width: 215px; height: 66px; background: #f0f0f0; border-top: 3px solid #fff; border-left: 3px solid #fff; border-right: 4px solid #777; padding-left: 18px; line-height: 58px; }
.cat-body { flex: 1; min-height: 0; display: flex; flex-direction: column; padding: 7px 10px 0 12px; border-top: 3px solid #fff; }
.cat-toolbar { height: 72px; flex: none; display: flex; padding-top: 8px; background: linear-gradient(#fbfbfb, #f0f0f0); column-gap: 22px; }
.cat-toolbar .ico { width: 49px; }
.grip-small { width: 9px; position: relative; margin-right: -1px; }
.grip-small::before { left: 6px; top: 0; width: 5px; }
.cat-grid { display: flex; flex: none; height: 1886px; margin-top: 3px; }
.cat-main { width: 979px; flex: none; display: flex; flex-direction: column; }
.g-head { height: 143px; flex: none; display: flex; background: #ece9d8; border-top: 5px solid #aba899; border-bottom: 3px solid #aba899; position: relative; z-index: 1; box-shadow: inset 0 -8px 0 #dedbc8; }
.gh-corner { width: 213px; border-left: 3px solid #aba899; border-right: 3px solid #aba899; border-bottom: 3px solid #aba899; margin-bottom: -3px; box-shadow: inset 0 3px 0 #fff; flex: none; }
.gh-type { width: 173px; padding: 8px 0 0 17px; line-height: 40px; position: relative; flex: none; }
.gh-type::after { content: ""; position: absolute; right: 0; top: 11px; height: 112px; width: 3px; background: #d5d2c0; }
.gh-name { padding: 8px 0 0 15px; line-height: 40px; }

.g-clip { height: 1687px; overflow: hidden; flex: none; }
.g-rows { margin-top: -32.400px; font-size: 36px; letter-spacing: .9px; }
.row { display: flex; height: 67.200px; background: #fff; }
.row.even { background: #dfdfdf; }
.row .rh { width: 214px; flex: none; padding-left: 25px; line-height: 57px; letter-spacing: .3px; background: linear-gradient(90deg, #aba899 0, #aba899 4px, #ece9d8 4px, #ece9d8 200px, #d2cfbb 212px, #aba899 214px); position: relative; }
.row .rh::after { content: ""; position: absolute; left: 15px; width: 184px; bottom: 0; height: 6px; background: linear-gradient(#c9c6b2 50%, #fff 50%); }
.row .c1, .row .c2 { border-bottom: 4px solid #aba899; line-height: 57px; white-space: nowrap; overflow: hidden; }
.row .c1 { width: 172px; flex: none; padding-left: 16px; letter-spacing: .2px; border-right: 3px solid #aba899; }
.row .c2 { width: 593px; flex: none; padding-left: 15px; }
.row.selected .c1, .row.selected .c2 { background: #2f69c4; color: #fff; }
.row.selected .rh { background: #deded6; border: 3px solid #aba899; padding-left: 22px; line-height: 51px; }
.row.selected .rh::after { display: none; }

.hscroll { height: 56px; flex: none; display: flex; padding: 4px 0 0 2px; background: linear-gradient(#f1f0e8, #f9f9f4); border-bottom: 3px solid #aba899; position: relative; }
.sb-btn { width: 45px; height: 46px; background: linear-gradient(90deg, #c3d2f2, #b4c8f0); border: 2px solid #fff; border-bottom: 4px solid #a9bde8; display: block; flex: none; }
.h-thumb { width: 616px; height: 46px; margin-left: 8px; background: linear-gradient(#ecf4fe, #c2d8fa); border: 2px solid #f2f6fd; border-bottom: 5px solid #a9c2ef; flex: none; }
.sb-right { margin-left: auto; margin-right: 4px; }
.vscroll { width: 53px; flex: none; position: relative; padding: 4px 0 0 3px; background: linear-gradient(90deg, #eeeee6, #f9f9f5); border-right: 3px solid #aba899; }
.sb-v { height: 46px; }
.v-thumb { display: block; width: 45px; height: 12px; margin-top: 33px; background: #c0d2f2; border: 2px solid #fff; border-bottom: 4px solid #a9bde8; }
.sb-vdown { position: absolute; left: 3px; top: 1781px; height: 50px; }
.sb-corner { position: absolute; left: 0; right: 0; bottom: 0; height: 56px; background: #ece9d8; border-bottom: 3px solid #aba899; }

/* status bar */
.statusbar { height: 99px; flex: none; margin-top: -15px; position: relative; background: linear-gradient(#8aaedd 0, #8aaedd 3px, #8e8e8e 3px, #8e8e8e 5px, #bfe6f3 5px, #bfe6f3 8px, #8aaedd 8px, #8aaedd 12px, #8e8e8e 12px, #8e8e8e 15px, #f0eded 15px, #f0eded 90px, #5c7c84 90px); }
```
FILE: script.js
```js
(function () {
  var NS = "http://www.w3.org/2000/svg";
  var host = document.getElementById("points");

  var greyPts = [
    [301,1460],[311,1458],[322,1478],[358,1468],[345,1491],[300,1509],[380,1512],[353,1523],[417,1523],[460,1531],
    [309,1547],[319,1544],[573,1540],[943,1553],[623,1582],[356,1542],[375,1540],[396,1557],[396,1577],[419,1542],
    [444,1542],[472,1553],[490,1560],[508,1567],[546,1789],[651,1803],[675,1845],[707,1870],[780,1857],[778,1835],
    [568,1907],[767,1907],[832,1638],[875,1675],[968,1708],[1015,1738],[865,1842],[926,1687],[831,1637],[875,1674],
    [927,1686],[925,1699],[1016,1738],[946,1723],[1263,1700],[1198,1733],[1217,1748],[1240,1746],[1123,1758],[1118,1780],
    [1249,1778],[1239,1787],[1221,1789],[1189,1800],[1195,1812],[1274,1810],[1262,1820],[1350,1818],[1074,1794],[1060,1806],
    [979,1762],[1148,1829],[1137,1839],[1111,1833],[1228,1845],[1308,1845],[1300,1854],[1277,1843],[1262,1850],[1421,1878],
    [1374,1880],[1338,1881],[1392,1896],[1402,1900],[1438,1906],[1450,1903],[1328,1894],[1295,1894],[1356,1910],[1343,1915],
    [1310,1912],[1297,1917],[1285,1927],[1341,1952],[1285,1948],[1249,1937],[1211,1933],[1149,1927],[1106,1923],[1093,1913],
    [1175,1906],[1083,1956],[1138,1956],[1180,1982],[1305,2000],[1202,2013],[1069,2011],[855,1976],[1425,2051],[1370,2082],
    [1261,1973],[1185,1875],[1200,1885],[1255,1905],[1280,1880],[1205,1860]
  ];
  var purplePts = [
    [281,1467],[388,1463],[425,1575],[444,1560],[901,1588],[674,1645],[764,1653],[505,1675],
    [523,1699],[686,1714],[716,1757],[744,1770],[742,1822],[1004,1717],[1005,1768],[967,1839],[912,1882],
    [1221,1706],[1302,1801],[1232,1809],[1089,1850],[1043,1868],[1137,1893],[1107,1905],
    [1359,1870],[1252,1898],[1221,1889],[1208,1902],[1223,1912],[1194,1927],[1238,1931],[1328,1929],[1354,1927],[1259,1961],
    [1323,1972],[1430,1987],[997,1995]
  ];
  var buriedPts = [[1161,1931],[401,1530],[490,1575],[1075,1875],[1239,1854],[1264,1887],[873,1743],[783,1742],[908,1760]];

  var seed = 12345;
  function rnd() { seed = (seed * 1664525 + 1013904223) % 4294967296; return seed / 4294967296; }

  function lerp(tbl, x) {
    for (var k = 1; k < tbl.length; k++) {
      if (x <= tbl[k][0]) {
        var a = tbl[k - 1], b = tbl[k];
        return a[1] + (b[1] - a[1]) * (x - a[0]) / (b[0] - a[0]);
      }
    }
    return tbl[tbl.length - 1][1];
  }

  var upper = [[460,1545],[566,1595],[745,1587],[800,1635],[925,1680],[1000,1720]];
  var lower = [[460,1650],[505,1703],[566,1745],[620,1790],[714,1785],[800,1823],[920,1857],[1000,1880]];
  var upper2 = [[960,1740],[989,1795],[1035,1815],[1075,1800],[1106,1835],[1175,1840]];
  var lower2 = [[960,1890],[1024,1894],[1075,1879],[1106,1890],[1175,1885]];

  function add(kind, x, y) {
    var u = document.createElementNS(NS, "use");
    u.setAttribute("href", "#hex-" + kind);
    u.setAttribute("x", x.toFixed(1));
    u.setAttribute("y", y.toFixed(1));
    host.appendChild(u);
  }

  buriedPts.forEach(function (p) { add("p", p[0], p[1]); });

  var i, x, y, up, lo;
  for (i = 0; i < 820; i++) {
    x = 460 + rnd() * 540;
    up = lerp(upper, x); lo = lerp(lower, x);
    y = up + rnd() * (lo - up);
    if (i % 28 === 0) { add("p", x, y); continue; }
    add(x > 925 ? "b" : "g", x, y);
  }
  for (i = 0; i < 240; i++) {
    x = 960 + rnd() * 215;
    up = lerp(upper2, x); lo = lerp(lower2, x);
    y = up + rnd() * (lo - up);
    if (Math.abs(y - (1770 + (x - 968) * 0.56)) < 20 && rnd() < 0.8) { continue; }
    add("b", x, y);
  }
  greyPts.forEach(function (p) { add(p[0] > 925 ? "b" : "g", p[0], p[1]); });
  purplePts.forEach(function (p) { add("p", p[0], p[1]); });
})();
```
